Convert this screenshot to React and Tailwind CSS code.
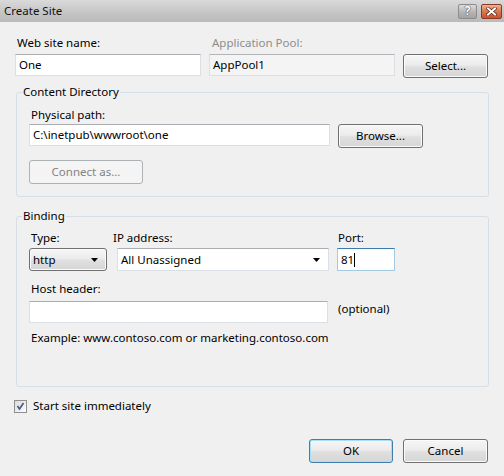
import { useState } from 'react'

const BTN_BG = 'bg-[linear-gradient(#f6f6f6_0%,#ececec_45%,#dfdfdf_55%,#d6d6d6_100%)]'

function Btn({ children, className = '', disabled, primary }) {
  let look = `border-[#707070] ${BTN_BG} shadow-[inset_0_0_0_1px_#fbfbfb] text-black`
  if (primary) look = `border-[#3c7fb1] ${BTN_BG} shadow-[inset_0_0_0_1px_#a6e0f7] text-black`
  if (disabled) look = 'border-[#adb2b5] bg-[#f4f4f4] text-[#838383]'
  return (
    <button className={`flex items-center justify-center h-[24px] rounded-[3px] border text-[11.5px] leading-none ${look} ${className}`}>
      {children}
    </button>
  )
}

function Arrow() {
  return (
    <svg width="7" height="4" viewBox="0 0 7 4" className="flex-shrink-0">
      <path d="M0 0h7L3.5 4z" fill="#000" />
    </svg>
  )
}

function Label({ children, className = '', muted }) {
  return <div className={`leading-[16px] text-[11.5px] ${muted ? 'text-[#8d8d8d]' : 'text-black'} ${className}`}>{children}</div>
}

function TextBox({ value, className = '', disabled, focus }) {
  const border = focus
    ? 'border-[#a4c9e3] border-t-[#3d7bad]'
    : 'border-[#dbdfe6] border-t-[#abadb3]'
  return (
    <div className={`flex items-center h-[22px] border px-[3px] text-[11.5px] ${border} ${disabled ? 'bg-[#f4f4f4]' : 'bg-white'} ${className}`}>
      <span>{value}</span>
      {focus && <span className="w-px h-[14px] bg-black" />}
    </div>
  )
}

export default function App() {
  const [start, setStart] = useState(true)

  return (
    <div className="w-[504px] h-[476px] bg-[#f0f0f0] font-['Noto_Sans',sans-serif] text-[11.5px] text-black overflow-hidden">
      {/* title bar */}
      <div className="flex items-center justify-between h-[22px] pl-[4px] pr-[2px] bg-[linear-gradient(#dadada,#c4c4c4_60%,#bababa)]">
        <span className="text-[11.5px] text-[#111]">Create Site</span>
        <div className="flex items-center gap-[4px]">
          <div className="flex items-center justify-center w-[19px] h-[15px] rounded-[2px] border border-[#8c8c8c] bg-[linear-gradient(#dcdcdc,#b4b4b4_55%,#a4a4a4)]">
            <span className="text-[12px] font-bold leading-none text-white [text-shadow:0_0_1px_#333,0_0_1px_#333]">?</span>
          </div>
          <div className="flex items-center justify-center w-[21px] h-[15px] rounded-[2px] border border-[#8b3b25] bg-[linear-gradient(#eeb196,#d9774f_50%,#c9522e)]">
            <svg width="11" height="9" viewBox="0 0 11 9">
              <path d="M2 1.5l7 6M9 1.5l-7 6" stroke="#5a2414" strokeWidth="3.4" strokeLinecap="square" />
              <path d="M2 1.5l7 6M9 1.5l-7 6" stroke="#fff" strokeWidth="2" strokeLinecap="square" />
            </svg>
          </div>
        </div>
      </div>

      <div className="pl-[15px] pr-[15px] pt-[13px]">
        {/* site name / app pool */}
        <div className="flex items-start">
          <div className="w-[186px]">
            <Label className="pl-[2px]">Web site name:</Label>
            <TextBox value="One" className="mt-[3px]" />
          </div>
          <div className="w-[186px] ml-[8px]">
            <Label muted className="pl-[3px]">Application Pool:</Label>
            <TextBox value="AppPool1" disabled className="mt-[3px] border-[#c9cbd0] border-t-[#b3b5bb]" />
          </div>
          <Btn className="w-[85px] ml-[8px] mt-[19px]">Select...</Btn>
        </div>

        {/* content directory */}
        <fieldset className="mt-[6px] ml-[1px] border border-[#d5dfe5] rounded-[3px] p-0 pb-[12px]">
          <legend className="ml-[5px] px-[1px] leading-[16px]">Content Directory</legend>
          <div className="pl-[12px]">
            <Label className="pl-[2px] mt-[7px]">Physical path:</Label>
            <div className="flex items-start mt-[1px]">
              <TextBox value={'C:\\inetpub\\wwwroot\\one'} className="w-[301px]" />
              <Btn className="w-[85px] ml-[8px]">Browse...</Btn>
            </div>
            <Btn disabled className="w-[114px] mt-[12px]">Connect as...</Btn>
          </div>
        </fieldset>

        {/* binding */}
        <fieldset className="mt-[11px] ml-[1px] border border-[#d5dfe5] rounded-[3px] p-0 pb-[40px]">
          <legend className="ml-[5px] px-[1px] leading-[16px]">Binding</legend>
          <div className="pl-[12px]">
            <div className="flex items-start mt-[6px]">
              <div className="w-[78px]">
                <Label className="pl-[2px]">Type:</Label>
                <div className={`flex items-center justify-between h-[23px] mt-[2px] pl-[3px] pr-[8px] rounded-[3px] border border-[#707070] ${BTN_BG} shadow-[inset_0_0_0_1px_#fbfbfb]`}>
                  <span>http</span>
                  <Arrow />
                </div>
              </div>
              <div className="w-[212px] ml-[10px]">
                <Label className="-ml-[4px]">IP address:</Label>
                <div className="flex items-center justify-between h-[23px] mt-[2px] pl-[3px] pr-[8px] bg-white border border-[#dbdfe6] border-t-[#abadb3]">
                  <span>All Unassigned</span>
                  <Arrow />
                </div>
              </div>
              <div className="w-[58px] ml-[8px]">
                <Label className="pl-[1px]">Port:</Label>
                <TextBox value="81" focus className="mt-[2px] h-[23px]" />
              </div>
            </div>

            <Label className="pl-[2px] mt-[10px]">Host header:</Label>
            <div className="flex items-start mt-[4px]">
              <TextBox value="" className="w-[299px]" />
              <span className="ml-[10px] leading-[16px]">(optional)</span>
            </div>
            <Label className="pl-[2px] mt-[7px]">Example: www.contoso.com or marketing.contoso.com</Label>
          </div>
        </fieldset>

        {/* start immediately */}
        <label className="flex items-center h-[16px] mt-[11px] -ml-[1px] cursor-default" onClick={() => setStart(s => !s)}>
          <span className="flex items-center justify-center w-[13px] h-[13px] border border-[#8f8f8f] bg-[linear-gradient(135deg,#dcdcdc,#fdfdfd)]">
            {start && (
              <svg width="9" height="9" viewBox="0 0 9 9">
                <path d="M1.5 4l2 3L7.5 1" fill="none" stroke="#4a5f88" strokeWidth="1.8" />
              </svg>
            )}
          </span>
          <span className="ml-[6px] leading-[16px]">Start site immediately</span>
        </label>

        {/* dialog buttons */}
        <div className="flex justify-end mt-[25px] pr-[1px]">
          <Btn primary className="w-[84px]">OK</Btn>
          <Btn className="w-[85px] ml-[10px]">Cancel</Btn>
        </div>
      </div>
    </div>
  )
}
